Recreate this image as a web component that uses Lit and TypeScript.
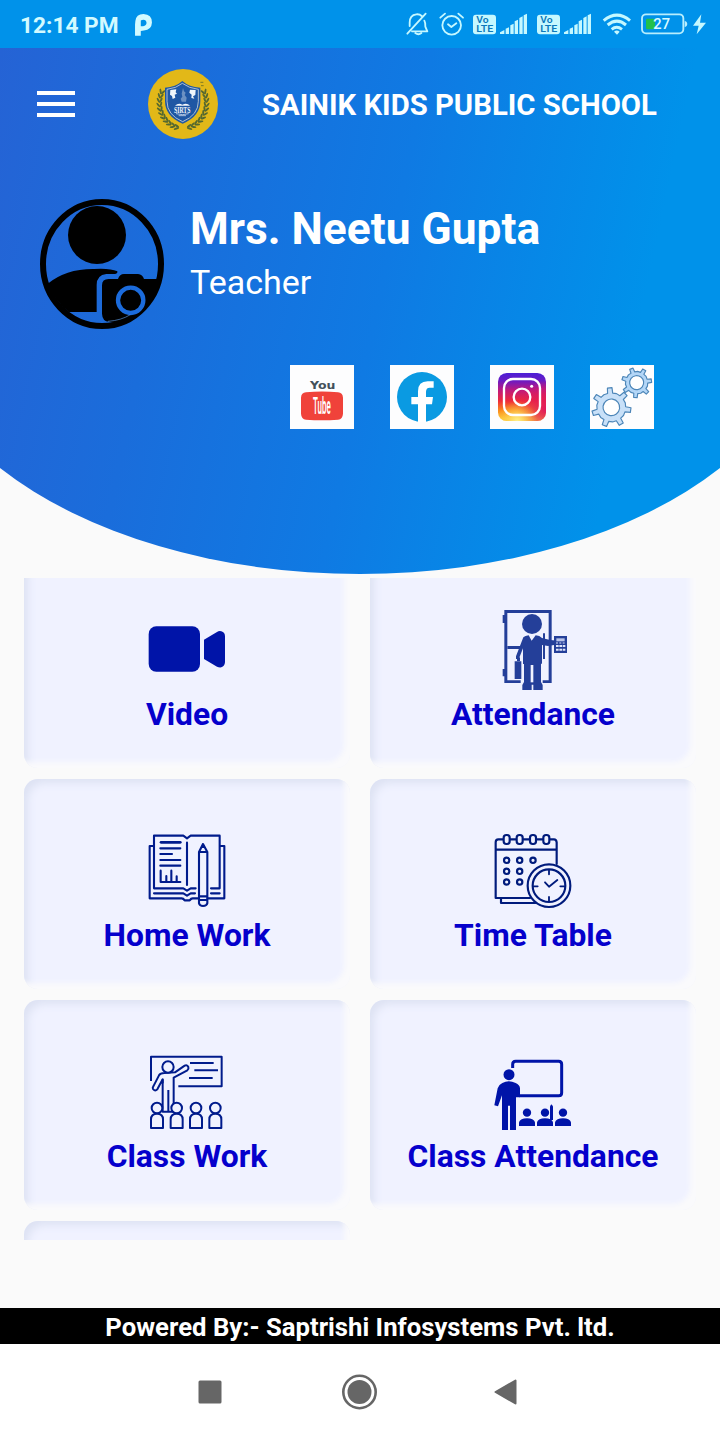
import { LitElement, html, svg, css } from "lit";
import { customElement } from "lit/decorators.js";

const volte = (x: number) => svg`
  <g transform="translate(${x} 0)">
    <rect x="249" y="44" width="69" height="59" rx="9" fill="#c5f8ff"/>
    <text x="259" y="70" font-size="26" font-weight="600" fill="#0b78bb" textLength="37" lengthAdjust="spacingAndGlyphs">Vo</text>
    <text x="259" y="97" font-size="28" font-weight="600" fill="#0b78bb" textLength="51" lengthAdjust="spacingAndGlyphs">LTE</text>
    <path fill="#c5f8ff" d="M330 102v-5l13-7v12zM347 102V86l10-4v20zM361 102V76l10-5v31zM374 102V64l10-5v43zM388 102V54l10-5v53zM401 102V46l10-5v61z"/>
  </g>`;

const statusIcons = svg`
  <g fill="none" stroke="#c5f8ff" stroke-width="5.5" stroke-linecap="round" stroke-linejoin="round">
    <path d="M52 101L107 41M59 78V68q0-23 20-25q10-1 16 5M103 62q4 7 3 18l6 14H66"/>
    <path d="M76 99q9 7 18 0" stroke-width="6"/>
    <circle cx="185" cy="76" r="28"/>
    <path d="M151 53l14-12M219 53l-14-12M174 73l10 8 15-11"/>
  </g>
  ${volte(0)}${volte(192)}
  <g fill="none" stroke="#c5f8ff" stroke-width="9">
    <path d="M641 62q40-33 79 0M653 75q28-23 55 0M665 88q15-12 31 0"/>
  </g>
  <path d="M672 95q8-7 17 0l-8 9z" fill="#c5f8ff"/>
  <rect x="756" y="43" width="124" height="57" rx="12" fill="none" stroke="#b8eefd" stroke-width="5.5"/>
  <rect x="768" y="56" width="27" height="32" rx="4" fill="#22c04a"/>
  <path d="M884 62q8 2 8 10t-8 10z" fill="#b8eefd"/>
  <text x="790" y="87" font-size="43" font-weight="500" fill="#d9fbff" textLength="50" lengthAdjust="spacingAndGlyphs">27</text>
  <path d="M934 43L909 77H926L920 103L948 68H930z" fill="#c5f8ff"/>`;

const leaves = [0, 1, 2, 3, 4, 5, 6, 7, 8, 9, 10].map((i) => {
  const deg = 200 - i * 10;
  const a = (deg * Math.PI) / 180;
  return { x: 70 * Math.cos(a), y: 76 * Math.sin(a), r: deg };
});
const branch = svg`${leaves.map(
  (l) => svg`<g transform="translate(${l.x.toFixed(1)} ${l.y.toFixed(1)}) rotate(${l.r})">
    <ellipse cx="4" cy="7" rx="3" ry="8.5" transform="rotate(-28 4 7)"/>
    <ellipse cx="-4" cy="7" rx="3" ry="8.5" transform="rotate(28 -4 7)"/></g>`
)}`;

const crest = svg`
  <circle cx="549" cy="312" r="105" fill="#e2b818"/>
  <g fill="#56692f"><g transform="translate(549 308)">${branch}</g>
  <g transform="translate(549 308) scale(-1 1)">${branch}</g></g>
  <path d="M547 243q20 18 54 20v40q0 46-53 68q-53-22-53-68v-40q32-2 52-20z" fill="#1f57a4"/>
  <path d="M547 250q20 15 48 18v36q0 41-47 61q-47-20-47-61v-36q28-3 46-18z" fill="none" stroke="#c9d2d8" stroke-width="2.5"/>
  <path d="M511 270l18-2-2 9 4 4-7 3 2 9-8 4-2-9-6-4zM570 269l17 1-1 15-7 4 4 7-9-2 1-10-7-6z" fill="#eff5fa"/>
  <path d="M549 264l3 10 5 4-3 7 6 8-2 12h-13l-3-9 5-6-2-9z" fill="#6c91c2"/>
  <path d="M525 317q10-9 22-3q14-6 23 3z" fill="#f2f6fa"/>
  <text x="522" y="339" font-size="24" font-weight="700" fill="#f2f6fa" font-family="Liberation Serif, serif" textLength="49" lengthAdjust="spacingAndGlyphs">SIRTS</text>
  <path d="M528 341q20 6 38 0M536 347h22" stroke="#f2f6fa" stroke-width="2" fill="none"/>
  <path d="M601 247h9M603 257h8" stroke="#4a5b2b" stroke-width="2"/>`;

const avatar = svg`
  <ellipse cx="246" cy="252" rx="177" ry="186" fill="none" stroke="#000" stroke-width="18"/>
  <circle cx="231" cy="165" r="87"/>
  <path d="M82 312q56-46 140-45q48-3 70 7q2 7-8 8h-25q-29 3-29 33v81H146q-44-36-64-84z"/>
  <path d="M246 316q0-19 20-19h28q5-15 18-15h42q14 2 18 15h45q-4 66-66 107q-46 29-84 21q-20-1-21-24z"/>
  <circle cx="332" cy="361" r="38" fill="none" stroke="#1b6bdc" stroke-width="13"/>
  <path d="M264 424q40-3 67-20" stroke="#5b96dd" stroke-width="2" fill="none"/>`;

const youtube = svg`
  <text x="120" y="116" font-size="33" font-weight="700" font-family="DejaVu Sans, sans-serif" fill="#43505a" textLength="76" lengthAdjust="spacingAndGlyphs">You</text>
  <path d="M108 127q48-5 96 0q14 1 15 16v48q-1 16-15 18q-48 4-96 0q-14-2-15-18v-48q1-15 15-16z" fill="#f0423a"/>
  <text x="0" y="0" transform="translate(129 191) scale(.5 1)" font-size="72" font-weight="600" fill="#fff" textLength="106" lengthAdjust="spacingAndGlyphs">Tube</text>`;

const facebook = svg`
  <circle cx="456" cy="141" r="75" fill="#0a9ae2"/>
  <path d="M444 217V163H424V141H444V124Q444 94 473 94H491V113H479Q468 113 468 126V141H489L486 163H468V217z" fill="#fff"/>`;

const instagram = svg`
  <defs>
    <linearGradient id="ig" x1="0" y1="0" x2="0" y2="1">
      <stop offset="0" stop-color="#4b1fd6"/><stop offset=".16" stop-color="#6a1bc4"/><stop offset=".36" stop-color="#c01a7c"/>
      <stop offset=".58" stop-color="#ee2a3a"/><stop offset=".78" stop-color="#fb8a1c"/><stop offset=".95" stop-color="#fdc63a"/>
    </linearGradient>
    <radialGradient id="igr" cx="1" cy=".75" r=".6">
      <stop offset="0" stop-color="#e0165e"/><stop offset="1" stop-color="#e0165e" stop-opacity="0"/>
    </radialGradient>
    <radialGradient id="igy" cx=".4" cy="1" r=".42">
      <stop offset="0" stop-color="#fff08a"/><stop offset="1" stop-color="#fdc63a" stop-opacity="0"/>
    </radialGradient>
  </defs>
  <rect x="684" y="69" width="144" height="144" rx="26" fill="url(#ig)"/>
  <rect x="684" y="69" width="144" height="144" rx="26" fill="url(#igr)"/>
  <rect x="684" y="69" width="144" height="144" rx="26" fill="url(#igy)"/>
  <rect x="702" y="87" width="108" height="108" rx="27" fill="none" stroke="#fff" stroke-width="7"/>
  <circle cx="756" cy="141" r="25" fill="none" stroke="#fff" stroke-width="7"/>
  <circle cx="785" cy="109" r="4.5" fill="#fff"/>`;

const gearPath = (r: number, teeth: number, h: number) => {
  const pts: string[] = [];
  const step = (Math.PI * 2) / teeth;
  for (let i = 0; i < teeth; i++) {
    const a = i * step;
    for (const [d, rad] of [[-0.2, r], [-0.13, r + h], [0.13, r + h], [0.2, r], [0.5, r + 1]]) {
      pts.push(`${(rad * Math.cos(a + d * step)).toFixed(1)} ${(rad * Math.sin(a + d * step)).toFixed(1)}`);
    }
  }
  return `M${pts.join("L")}Z`;
};

const gears = svg`
  <g stroke="#4d86b8" stroke-width="3.5" fill="#c8e0f8" stroke-linejoin="round">
    <g transform="translate(1024 172) rotate(8)"><path d="${gearPath(43, 7, 16)}"/><circle r="25" fill="#fff"/></g>
    <g transform="translate(1100 98) rotate(-8)"><path d="${gearPath(33, 7, 12)}" fill="#b3d6f7"/><circle r="21" fill="#fff"/></g>
  </g>`;

const video = svg`<g fill="#0014a8">
  <rect x="56" y="79" width="154" height="136" rx="23"/>
  <path d="M222 119L261 96Q267 92 274 94Q285 97 285 109V187Q284 199 274 202Q267 203 261 200L222 177z"/></g>`;

const attendance = svg`<g fill="#243f99">
  <path d="M73 30h142v219H73zM82 39v202h124V39z" fill-rule="evenodd"/>
  <path d="M68 45h8v24h-8zM68 207h8v22h-8zM82 138h38v9H82zM189 100h6v77h-6z"/>
  <path d="M122 252V232H188V252z" fill="#f0f2ff"/>
  <circle cx="156" cy="72" r="30"/>
  <path d="M130 112q5-5 16-6l9 16 12-16q12 1 19 8l36 9v12l-18 3l-18-3v56h-3v55l5 9v15h-28v-16h-5v16h-28v-15l5-9v-54h-3v-47l-10 25v7h-11v-8z"/>
  <path d="M152 195h8v52h-8z" fill="#f0f2ff"/>
  <path d="M111 173h9v10h-9zM104 184h20v53h-20z"/>
  <path d="M204 121h20v14h-20z"/>
  <path d="M222 108h39v51h-39z"/></g>
  <path d="M229 115h25v9h-25z" fill="#b9c4ea"/>
  <path d="M228 138h28M228 149h28" stroke="#dfe5fb" stroke-width="6" stroke-dasharray="8 2"/>
  <path d="M228 129h28" stroke="#dfe5fb" stroke-width="3" stroke-dasharray="6 4"/>`;

const homework = svg`<g fill="none" stroke="#001b8c" stroke-width="6.3" stroke-linejoin="round" stroke-linecap="round">
  <path d="M72 204V47H160L171 55L182 47H269V204M72 205H160L171 212L182 205H197M243 205H269"/>
  <path d="M70 78H59V235H155Q160 235 164 241H179Q183 235 188 235H207M233 235H283V78H272"/>
  <path d="M72 220H160L171 227L182 220H195M243 220H269"/>
  <path d="M171 68V195M91 85H151M91 102H126M91 120H151M91 137H151M92 152V186H151M109 184V168M124 184V152M140 184V169"/>
  <path d="M93 67H151" stroke-width="8"/>
  <path d="M219 72L207 96V250Q209 258 219 258Q230 258 232 250V96zM207 96H232M207 229H232M207 240H232"/></g>
  <path d="M219 72L213 84H226z" fill="#001b8c"/>`;

const dots = [[80, 121], [119, 121], [159, 121], [80, 154], [119, 154], [80, 186], [119, 186]];
const timetable = svg`<g fill="none" stroke="#001b7c" stroke-width="6.5" stroke-linejoin="round" stroke-linecap="round">
  <path d="M68 58H55Q47 58 47 67V234H150M230 132V67Q229 58 222 58H211M91 58H107M131 58H148M172 58H187M47 89H230M63 236V249H166"/>
  ${[80, 119, 159, 199].map((x) => svg`<rect x="${x - 9}" y="45" width="18" height="27" rx="8"/>`)}
  ${dots.map(([x, y]) => svg`<circle cx="${x}" cy="${y}" r="8" stroke-width="6.5"/>`)}
  <circle cx="207" cy="197" r="64" fill="#f0f2ff"/><circle cx="207" cy="197" r="49"/>
  <path d="M207 151V163M207 231V243M161 199H173M241 199H253M195 187L207 200L232 180" stroke-width="5.5"/></g>`;

const classwork = svg`<g fill="none" stroke="#001b8c" stroke-width="6" stroke-linejoin="round">
  <path d="M63 123V50H275V139H145M180 69H251M193 91H264M177 114H248"/>
  <path d="M98 215V118L82 148Q75 155 69 147Q67 143 70 139L87 106Q91 99 103 99L135 97L164 77Q171 73 175 81Q177 87 172 91L131 113V215z" fill="#f0f2ff"/>
  <path d="M98 118V130M115 150V215"/>
  <circle cx="114" cy="81" r="17" fill="#f0f2ff"/>
  ${[81, 140, 198, 256].map((x) => svg`<circle cx="${x}" cy="204" r="16" fill="#f0f2ff"/>
    <path d="M${x - 18} 264V238Q${x - 18} 221 ${x} 221T${x + 18} 238V264z" fill="#f0f2ff"/>`)}</g>`;

const classAttendance = svg`
  <path d="M98 84V73Q98 64 107 64H236Q245 64 245 73V158Q245 167 236 167H118" fill="none" stroke="#0014a8" stroke-width="9"/>
  <g fill="#0014a8"><circle cx="87" cy="104" r="16.5"/>
  <path d="M67 129Q86 119 107 129Q119 134 120 145V172H108V270H90V197H84V270H66V166L54 199L43 196L53 145Q56 134 67 129z"/>
  ${[141, 195, 249].map((x) => svg`<circle cx="${x}" cy="218" r="12.5"/>
    <path d="M${x - 24} 258V247Q${x - 20} 235 ${x} 235T${x + 24} 247V258z"/>`)}
  <path d="M210 240V199l4-6 5 6V240z"/></g>`;

const tiles = [
  { label: "Video", icon: video, box: "51 24 240 240" },
  { label: "Attendance", icon: attendance, box: "39 24 240 240" },
  { label: "Home Work", icon: homework, box: "51 27 240 240" },
  { label: "Time Table", icon: timetable, box: "39 27 240 240" },
  { label: "Class Work", icon: classwork, box: "51 30 240 240" },
  { label: "Class Attendance", icon: classAttendance, box: "39 30 240 240" },
];

const socials = [
  { icon: youtube, box: "60 45 192 192" },
  { icon: facebook, box: "360 45 192 192" },
  { icon: instagram, box: "660 45 192 192" },
  { icon: gears, box: "960 45 192 192" },
];

@customElement("app-root")
export class AppRoot extends LitElement {
  static styles = css`
    :host { display: flex; flex-direction: column; width: 720px; height: 1440px; overflow: hidden; background: #fafafa; font-family: Roboto, sans-serif; }
    * { box-sizing: border-box; }
    svg { display: block; flex: none; overflow: visible; }
    .status { display: flex; justify-content: space-between; height: 48px; flex: none; background: #0092ea; padding-left: 20px; }
    .clock { display: flex; align-items: center; gap: 16px; color: #d2faff; font-size: 22.7px; font-weight: 700; white-space: nowrap; padding-top: 2px; }
    .hero { height: 526px; flex: none; color: #fff; background: linear-gradient(102deg, #2563d5 0%, #1a6ddb 25%, #0f7ae3 52%, #0092ea 84%); clip-path: path("M0 0H720V420A450 265 0 0 1 0 420Z"); }
    .bar { display: flex; align-items: center; padding: 20px 0 0 37px; height: 92px; }
    .menu { display: flex; flex-direction: column; gap: 7px; width: 38px; margin-right: 73px; }
    .line { height: 4px; background: #fff; }
    .school { margin-left: 44px; padding-top: 1px; font-size: 29.3px; font-weight: 700; white-space: nowrap; }
    .profile { display: flex; padding: 59px 0 0 40px; }
    .who { padding: 6px 0 0 26px; white-space: nowrap; }
    .name { font-size: 44.3px; font-weight: 700; line-height: 49px; }
    .role { font-size: 34px; line-height: 40px; padding-top: 8px; }
    .social { display: flex; gap: 36px; padding: 36px 0 0 290px; }
    .tile { width: 64px; height: 64px; background: #fdfdfe; }
    .scroll { height: 662px; margin-top: 4px; padding: 0 24px; overflow: hidden; flex: none; }
    .grid { display: grid; grid-template-columns: 326px 326px; grid-auto-rows: 210px; gap: 11px 20px; margin-top: -20px; }
    .card { display: flex; flex-direction: column; align-items: center; padding-top: 50px; border-radius: 14px; background: #f0f2ff; box-shadow: inset -9px -9px 5px -3px #fafafc, inset 6px 6px 8px -2px #dde2f3; }
    .label { font-size: 31.8px; line-height: 40px; font-weight: 700; color: #0500cc; padding-top: 6px; white-space: nowrap; }
    .powered { margin-top: 68px; height: 36px; flex: none; background: #000; color: #fff; text-align: center; font-size: 25.7px; line-height: 38px; font-weight: 700; white-space: nowrap; }
    .nav { flex: 1; background: #fff; display: flex; align-items: center; padding: 0 0 0 198px; }
    .home { margin-left: 119px; }
    .back { margin-left: 116px; }
  `;

  render() {
    return html`
      <div class="status">
        <div class="clock">
          <span>12:14 PM</span>
          <svg width="17" height="22" viewBox="404 41 50 65"><path d="M405 62Q407 41 429 41Q454 42 454 66Q453 88 430 90L421 91V105H404V72zM421 60V77H428Q438 76 438 67Q437 58 429 58Q424 58 421 60z" fill-rule="evenodd" fill="#d2faff"/></svg>
        </div>
        <svg width="330" height="48" viewBox="0 0 990 144">${statusIcons}</svg>
      </div>
      <div class="hero">
        <div class="bar">
          <div class="menu"><div class="line"></div><div class="line"></div><div class="line"></div></div>
          <svg width="70" height="70" viewBox="444 207 210 210">${crest}</svg>
          <div class="school">SAINIK KIDS PUBLIC SCHOOL</div>
        </div>
        <div class="profile">
          <svg width="124" height="130" viewBox="60 57 372 390">${avatar}</svg>
          <div class="who"><div class="name">Mrs. Neetu Gupta</div><div class="role">Teacher</div></div>
        </div>
        <div class="social">
          ${socials.map((s) => html`<div class="tile"><svg width="64" height="64" viewBox="${s.box}">${s.icon}</svg></div>`)}
        </div>
      </div>
      <div class="scroll">
        <div class="grid">
          ${tiles.map((t) => html`<div class="card"><svg width="80" height="80" viewBox="${t.box}">${t.icon}</svg><div class="label">${t.label}</div></div>`)}
          <div class="card"></div>
        </div>
      </div>
      <div class="powered">Powered By:- Saptrishi Infosystems Pvt. ltd.</div>
      <div class="nav">
        <svg width="24" height="24"><rect x="0.5" y="0.5" width="23" height="23" rx="1.5" fill="#666"/></svg>
        <svg class="home" width="36" height="36"><circle cx="18.5" cy="18" r="16.2" fill="none" stroke="#666" stroke-width="2.6"/><circle cx="18.5" cy="18" r="12" fill="#666"/></svg>
        <svg class="back" width="26" height="28"><path d="M2.5 14L22.5 2.5V25.5z" fill="#666" stroke="#666" stroke-width="2" stroke-linejoin="round"/></svg>
      </div>`;
  }
}
